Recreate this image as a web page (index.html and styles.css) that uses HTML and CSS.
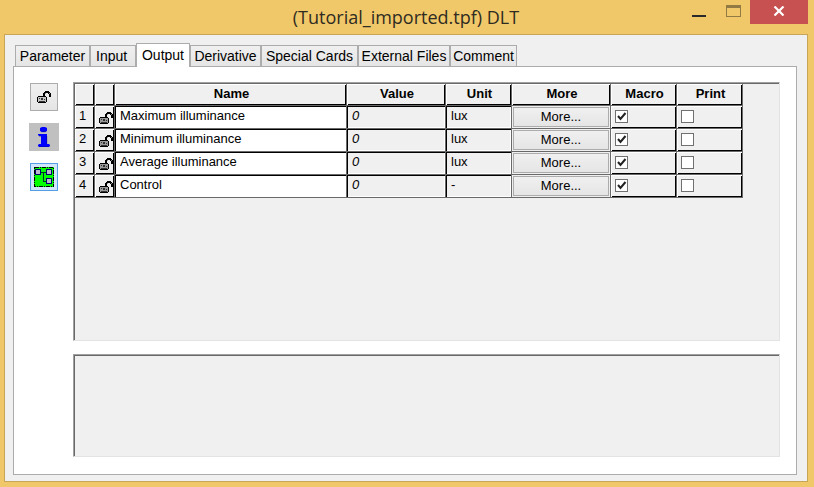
FILE: index.html
```html
<!DOCTYPE html>
<html lang="en">
<head>
<meta charset="utf-8">
<title>(Tutorial_imported.tpf) DLT</title>
<link rel="stylesheet" href="styles.css">
</head>
<body>
<svg class="defs" aria-hidden="true">
  <symbol id="lock" viewBox="0 0 14 12" shape-rendering="crispEdges">
    <path d="M6 2h1V1h1V0h4v1h1v1h1v4h-2V3h-1V2H9v1H8v2H6z" fill="#000"/>
    <path d="M1 5h8v1h1v5H9v1H1v-1H0V6h1z" fill="#000"/>
    <path d="M1 6h8v5H1z" fill="currentColor"/>
    <path d="M8 2h1v1H8zM12 2h1v1h-1z" fill="#888"/>
    <path d="M2 7h1v1H2zM4 7h2v2H4zM7 8h1v1H7zM2 10h6v1H2z" fill="#333"/>
  </symbol>
</svg>
<header class="titlebar">
  <h1 class="title">(Tutorial_imported.tpf) DLT</h1>
  <div class="controls">
    <button class="control minimize" aria-label="Minimize"><svg width="14" height="2"><path d="M0 0h14v2H0z" fill="#2b2b2b"/></svg></button>
    <button class="control maximize" aria-label="Maximize" disabled><svg width="15" height="12" shape-rendering="crispEdges"><path d="M0 0h15v12H0zM1 3v8h13V3z" fill="#927a45" fill-rule="evenodd"/></svg></button>
    <button class="control close" aria-label="Close"><svg width="12" height="10" viewBox="0 0 12 10"><path d="M1.500.5l9 9M10.500.5l-9 9" stroke="#fff" stroke-width="2.200"/></svg></button>
  </div>
</header>
<main class="client">
  <div class="tabs" role="tablist">
    <button class="tab tab-parameter" role="tab">Parameter</button>
    <button class="tab tab-input" role="tab">Input</button>
    <button class="tab tab-output active" role="tab" aria-selected="true">Output</button>
    <button class="tab tab-derivative" role="tab">Derivative</button>
    <button class="tab tab-cards" role="tab">Special Cards</button>
    <button class="tab tab-files" role="tab">External Files</button>
    <button class="tab tab-comment" role="tab">Comment</button>
  </div>
  <section class="pane" role="tabpanel">
    <div class="tools">
      <button class="tool" aria-label="Lock"><svg width="14" height="12"><use href="#lock"/></svg></button>
      <button class="tool info" aria-label="Information"><svg width="12" height="20" viewBox="0 0 12 20"><path d="M4 0h3l2 1v3L7 5H4L2 4V1z" fill="#00f"/><path d="M0 7h9v10h2l1 1v1l-1 1H1l-1-1v-1l1-1h2V9H1L0 8z" fill="#00f"/><path d="M3 4.700h5M8.700 9v8M1 19.700h10M1 9h2" fill="none" stroke="#0000a0" stroke-width=".6"/></svg></button>
      <button class="tool selected" aria-label="Connections"><svg width="20" height="20" viewBox="0 0 20 20" shape-rendering="crispEdges"><path d="M0 0h20v20H0z" fill="#0f0"/><path d="M.5.5h19v19H.5z" fill="none" stroke="#000" stroke-dasharray="4 1 1 1"/><path d="M7 5h5M9.500 5v9.500H13" fill="none" stroke="#003030" stroke-width="1"/><path d="M1 2h6v6H1zM12 2h6v6h-6zM12 11h6v6h-6z" fill="#000070"/><path d="M2 3h4v4H2zM13 3h4v4h-4zM13 12h4v4h-4z" fill="#b8b8c8"/></svg></button>
    </div>
    <div class="panels">
      <div class="panel">
        <table class="grid">
          <colgroup><col class="c-mark"><col class="c-mark"><col class="c-name"><col class="c-wide"><col class="c-small"><col class="c-wide"><col class="c-small"><col class="c-small"></colgroup>
          <thead>
            <tr><th></th><th></th><th>Name</th><th>Value</th><th>Unit</th><th>More</th><th>Macro</th><th>Print</th></tr>
          </thead>
          <tbody>
            <tr>
              <td class="raised num">1</td><td class="raised lock"><svg width="14" height="12"><use href="#lock"/></svg></td>
              <td class="sunken name">Maximum illuminance</td><td class="sunken value">0</td><td class="sunken">lux</td>
              <td class="more"><button>More...</button></td>
              <td class="raised check"><input type="checkbox" aria-label="Macro 1" checked></td><td class="raised check"><input type="checkbox" aria-label="Print 1"></td>
            </tr>
            <tr>
              <td class="raised num">2</td><td class="raised lock"><svg width="14" height="12"><use href="#lock"/></svg></td>
              <td class="sunken name">Minimum illuminance</td><td class="sunken value">0</td><td class="sunken">lux</td>
              <td class="more"><button>More...</button></td>
              <td class="raised check"><input type="checkbox" aria-label="Macro 2" checked></td><td class="raised check"><input type="checkbox" aria-label="Print 2"></td>
            </tr>
            <tr>
              <td class="raised num">3</td><td class="raised lock"><svg width="14" height="12"><use href="#lock"/></svg></td>
              <td class="sunken name">Average illuminance</td><td class="sunken value">0</td><td class="sunken">lux</td>
              <td class="more"><button>More...</button></td>
              <td class="raised check"><input type="checkbox" aria-label="Macro 3" checked></td><td class="raised check"><input type="checkbox" aria-label="Print 3"></td>
            </tr>
            <tr>
              <td class="raised num">4</td><td class="raised lock"><svg width="14" height="12"><use href="#lock"/></svg></td>
              <td class="sunken name">Control</td><td class="sunken value">0</td><td class="sunken">-</td>
              <td class="more"><button>More...</button></td>
              <td class="raised check"><input type="checkbox" aria-label="Macro 4" checked></td><td class="raised check"><input type="checkbox" aria-label="Print 4"></td>
            </tr>
          </tbody>
        </table>
      </div>
      <div class="panel"></div>
    </div>
  </section>
</main>
</body>
</html>
```
FILE: styles.css
```css
* { box-sizing: border-box; }

body {
  margin: 0;
  min-height: 100vh;
  display: flex;
  flex-direction: column;
  padding: 0 6px 5px 4px;
  background: #f0c869;
  color: #000;
  font: 13px/16px "Liberation Sans", Arial, sans-serif;
}

button { font: inherit; color: inherit; padding: 0; margin: 0; border-radius: 0; }
svg { display: block; }
.defs { position: absolute; width: 0; height: 0; }

/* Title bar */
.titlebar {
  height: 34px;
  display: grid;
  grid-template-columns: 1fr auto 1fr;
}
.title {
  grid-column: 2;
  margin: 0;
  font: 18px/34px "Open Sans", "Noto Sans", sans-serif;
  color: #2f2b22;
}
.controls { display: flex; justify-content: flex-end; }
.control {
  width: 34px;
  height: 24px;
  border: 0;
  background: none;
  display: flex;
  justify-content: center;
}
.minimize { padding-top: 15px; }
.maximize { padding-top: 5px; }
.close { width: 58px; background: #c75050; padding-top: 6px; }

/* Client area */
.client {
  flex: 1;
  display: flex;
  flex-direction: column;
  border: 1px solid #c8a657;
  background: #f0f0f0;
  padding: 8px 10px 6px 8px;
}

.tabs { display: flex; align-items: flex-end; padding-left: 2px; font-size: 14px; }
.tab {
  height: 22px;
  margin-bottom: -1px;
  border: 1px solid #acacac;
  background: linear-gradient(#f0f0f0, #e5e5e5);
  white-space: nowrap;
}
.tab-parameter { width: 75px; }
.tab-input { width: 46px; text-align: left; padding-left: 5px; }
.tab-output { width: 54px; }
.tab-derivative { width: 71px; }
.tab-cards { width: 97px; }
.tab-files { width: 92px; }
.tab-comment { width: 67px; }
.tab.active {
  height: 24px;
  padding-bottom: 2px;
  border-bottom: 0;
  background: #fff;
  position: relative;
}

.pane {
  flex: 1;
  display: flex;
  gap: 14px;
  border: 1px solid #acacac;
  background: #fff;
  padding: 15px 16px 17px 15px;
}

/* Icon buttons */
.tools { display: flex; flex-direction: column; align-items: center; gap: 12px; padding-top: 1px; width: 30px; }
.tool {
  width: 28px;
  height: 28px;
  border: 1px solid #acacac;
  background: linear-gradient(#f0f0f0, #e5e5e5);
  color: #c4c4c4;
  display: flex;
  align-items: center;
  justify-content: center;
}
.tool.info { width: 30px; border: 0; background: #c0c0c0; }
.tool.selected { border-color: #569de5; background: #cfe6fc; }

/* Sunken panels */
.panels { flex: 1; display: grid; grid-template-rows: 5fr 2fr; gap: 13px; }
.panel {
  background: #f0f0f0;
  border: 1px solid;
  border-color: #a0a0a0 #e3e3e3 #e3e3e3 #a0a0a0;
  box-shadow: inset 1px 1px #696969;
  padding: 1px 0 0 1px;
}

/* Data grid */
.grid { table-layout: fixed; width: 668px; border-collapse: separate; border-spacing: 0; }
.c-mark { width: 20px; }
.c-name { width: 232px; }
.c-wide { width: 99px; }
.c-small { width: 66px; }
.grid th, .grid td {
  height: 23px;
  padding: 0 0 2px 5px;
  border: solid #696969;
  border-width: 0 1px 1px 0;
  text-align: left;
  line-height: 16px;
}
.grid th {
  height: 22px;
  padding: 0 0 2px 2px;
  text-align: center;
  box-shadow: inset 1px 1px #fff, inset -1px -1px #000;
}
.grid .raised { box-shadow: inset 1px 1px #fff, inset -1px -1px #000; }
.grid .sunken { box-shadow: inset 1px 1px #000, inset -1px -1px #fff; }
.grid .name { background: #fff; }
.grid .value { font-style: italic; }
.grid .num { padding-left: 4px; }
.grid .lock { padding: 1px 0 0 4px; color: #999; }
.grid .check { padding: 0 0 1px 4px; }
.grid .more { padding: 0; }
.more button {
  display: block;
  width: calc(100% - 2px);
  height: 20px;
  margin: 0 auto;
  border: 1px solid #acacac;
  background: linear-gradient(#f0f0f0, #e5e5e5);
}
.check input {
  appearance: none;
  display: block;
  width: 13px;
  height: 13px;
  margin: 0;
  border: 1px solid #707070;
  background: #fff;
}
.check input:checked {
  background-image: url("data:image/svg+xml,%3Csvg xmlns='http://www.w3.org/2000/svg' viewBox='0 0 11 11'%3E%3Cpath d='M2 5l2.500 3L9.500 2' fill='none' stroke='%23212121' stroke-width='2'/%3E%3C/svg%3E");
}
```
